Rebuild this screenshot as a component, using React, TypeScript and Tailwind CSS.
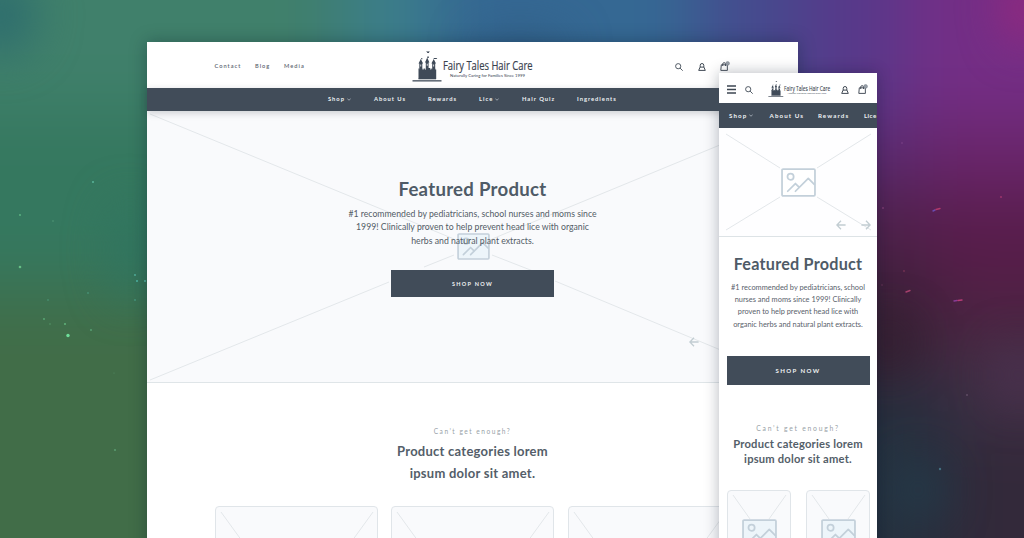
import type { ReactNode } from "react";

const stars: [number, number, number, string][] = [
  [93, 182, 1, "#58b59a"], [20, 215, 0.9, "#5fb985"], [53, 221, 0.7, "#5aa07c"],
  [20, 267, 1.3, "#66bf86"], [135, 275, 0.9, "#53b4a0"], [137, 281, 1, "#4fb6a6"],
  [145, 281, 0.9, "#58c0ae"], [88, 293, 0.8, "#4fa287"], [48, 300, 0.8, "#4f9d7d"],
  [135, 300, 0.8, "#4eab94"], [44, 319, 0.9, "#5cac78"], [65, 324, 1, "#62b37b"],
  [68, 335.5, 1.7, "#6fdf9a"], [91, 330, 0.9, "#5aa578"], [50, 324, 0.7, "#5a9d70"],
  [115, 450, 1, "#5b9d70"], [114, 373, 0.6, "#548c66"], [902, 143, 0.8, "#7d4688"],
  [883, 208, 1, "#7b3a70"], [1001, 197, 1.1, "#99336b"], [904, 271, 0.9, "#753252"],
  [882, 285, 0.8, "#6a3458"], [967, 395, 1.1, "#5d4a62"], [940, 469, 1.2, "#456f80"],
];

function Nebula() {
  return (
    <svg className="absolute inset-0 h-full w-full" viewBox="0 0 1024 538" preserveAspectRatio="none">
      <defs>
        <filter id="haze" filterUnits="userSpaceOnUse" x="-200" y="-200" width="1424" height="938" colorInterpolationFilters="sRGB">
          <feGaussianBlur stdDeviation="34" />
        </filter>
        <filter id="mist" filterUnits="userSpaceOnUse" x="-200" y="-200" width="1424" height="938" colorInterpolationFilters="sRGB">
          <feGaussianBlur stdDeviation="22" />
        </filter>
      </defs>
      <g filter="url(#haze)">
        <rect x="-200" y="-200" width="1424" height="938" fill="#35647a" />
        <rect x="-200" y="-200" width="540" height="320" fill="#40806b" />
        <rect x="-200" y="110" width="500" height="200" fill="#35785f" />
        <rect x="-200" y="290" width="500" height="450" fill="#416d48" />
        <rect x="345" y="-200" width="95" height="320" fill="#3c7f8a" />
        <rect x="430" y="-200" width="290" height="320" fill="#356893" />
        <rect x="700" y="-200" width="115" height="380" fill="#454b8e" />
        <rect x="800" y="-200" width="110" height="350" fill="#57398a" />
        <rect x="905" y="-200" width="320" height="330" fill="#742e86" />
        <rect x="800" y="120" width="120" height="75" fill="#592a6f" />
        <rect x="915" y="120" width="310" height="80" fill="#69256a" />
        <rect x="800" y="190" width="120" height="90" fill="#4b2149" />
        <rect x="915" y="195" width="310" height="110" fill="#571d4a" />
        <rect x="800" y="275" width="130" height="110" fill="#352033" />
        <rect x="925" y="295" width="300" height="60" fill="#4a2440" />
        <rect x="925" y="350" width="300" height="85" fill="#422f46" />
        <rect x="800" y="385" width="150" height="360" fill="#25313f" />
        <rect x="945" y="425" width="280" height="320" fill="#33293a" />
      </g>
      <g filter="url(#mist)">
        <ellipse cx="0" cy="15" rx="36" ry="40" fill="#2e6d6e" />
        <ellipse cx="130" cy="250" rx="20" ry="50" fill="#30745f" />
        <ellipse cx="520" cy="45" rx="50" ry="10" fill="#2d587d" />
        <ellipse cx="1024" cy="8" rx="20" ry="38" fill="#97287d" />
        <ellipse cx="1018" cy="375" rx="22" ry="32" fill="#4a324f" />
        <ellipse cx="918" cy="490" rx="26" ry="32" fill="#243948" />
        <ellipse cx="888" cy="342" rx="22" ry="22" fill="#341e30" />
      </g>
      {stars.map(([x, y, r, c]) => (
        <circle key={`${x}-${y}`} cx={x} cy={y} r={r} fill={c} />
      ))}
      <g strokeLinecap="round" strokeWidth="1.4" fill="none">
        <path d="M933 211l2-1" stroke="#6b4bb0" />
        <path d="M936 209.500l4-1" stroke="#b23a6c" />
        <path d="M906 292l4-1.500" stroke="#a5406c" />
        <path d="M954 301l3-.5" stroke="#8a3c98" />
        <path d="M958 300.500l4-.5" stroke="#b83d76" />
      </g>
    </svg>
  );
}

function Castle() {
  return (
    <g fill="#3f4a58">
      <path d="M.5 31.200h29v1.300H.5z" />
      <path d="M6.500 19.500h1.200v1h1.300v-1h1.300v1h1.300v-1h1.300v1h1v-1.500h4.400v1.500h1v-1h1.300v1h1.300v-1h1.300v1h1v9.500H6.500z" />
      <path d="M7.300 14h3v7h-3zM13.800 13h2.800v7h-2.800zM20.200 14h3v7h-3z" />
      <path d="M6.500 14.600l2.300-4.600 2.300 4.600zM13 13.600l2.200-5.200 2.200 5.200zM19.400 14.600l2.300-4.600 2.300 4.600z" />
      <path d="M15.300 7.600h1.500v1.300h-1.500zM21.700 9h3.600l-.8 1.100h-2.800zM9 9.200h1.400v1H9z" />
      <path d="M14.200 2.200l1.800.4 1.700-.4-.9 1.700-1.300.2z" />
      <path d="M6.500 29.500h17.500v.8H6.500z" />
      <path d="M8.400 15.500h.8v2h-.8zM14.800 14.800h.8v2h-.8zM21.300 15.500h.8v2h-.8z" fill="#fff" />
    </g>
  );
}

function Logo({ className }: { className: string }) {
  return (
    <svg className={className} viewBox="0 0 122 34" overflow="visible">
      <Castle />
      <text x="31" y="21.200" fontFamily="'Open Sans', sans-serif" fontSize="13.200" fontWeight="500" fill="#39424e" stroke="#39424e" strokeWidth=".2" textLength="89.500" lengthAdjust="spacingAndGlyphs">
        Fairy Tales Hair Care
      </text>
      <text x="38" y="27.700" fontFamily="Lato, sans-serif" fontSize="4.300" fontWeight="500" fill="#4a535f" textLength="75" lengthAdjust="spacingAndGlyphs">
        Naturally Caring for Families Since 1999
      </text>
    </svg>
  );
}

const SearchIcon = () => (
  <svg className="h-[8px] w-[8px]" viewBox="0 0 8 8" fill="none" stroke="#4a535e" strokeWidth=".95">
    <circle cx="3.2" cy="3.2" r="2.600" />
    <path d="M5.100 5.100l2.600 2.600" />
  </svg>
);

const AccountIcon = () => (
  <svg className="h-[8px] w-[8px]" viewBox="0 0 8 8" fill="none" stroke="#414a55" strokeWidth="1">
    <path d="M2.200 4.200V2.400a1.800 1.900 0 0 1 3.600 0v1.800" />
    <path d="M2.100 4.100h3.800l1.400 3.300H.7z" />
  </svg>
);

const BagIcon = () => (
  <svg className="h-[10px] w-[10px]" viewBox="0 0 10 10" fill="none" stroke="#414a55" strokeWidth=".95">
    <path d="M1.300 3.800h6l.1 5.600H.8zM2.700 5V3c0-1.800 2.800-1.800 2.800 0v2" />
    <circle cx="7.600" cy="2.400" r="1.900" fill="#98a0a9" stroke="#79818b" strokeWidth=".5" />
  </svg>
);

const Chevron = () => (
  <svg className="h-[3px] w-[4px]" viewBox="0 0 4 3" fill="none" stroke="#b4bcc5" strokeWidth=".8">
    <path d="M.4.800L2 2.200 3.600.800" />
  </svg>
);

function Picture({ className, fill = "#edf5fa" }: { className: string; fill?: string }) {
  return (
    <svg className={className} viewBox="0 0 34 28" fill="none" stroke="#c3d0da" strokeWidth="1.700" strokeLinejoin="round" strokeLinecap="round">
      <rect x="1" y="1" width="32" height="26" rx="1" fill={fill} />
      <circle cx="9.300" cy="8.400" r="3" />
      <path d="M6.500 22.500l7.500-7.500 3.800 3.800M14 22.500L26.500 10l5.800 5.800" />
    </svg>
  );
}

const Arrow = ({ flip = false }: { flip?: boolean }) => (
  <svg className={flip ? "h-[10px] w-[10px] rotate-180" : "h-[10px] w-[10px]"} viewBox="0 0 10 10" fill="none" stroke="#c2cdd2" strokeWidth="1.300">
    <path d="M9.600 5H1M5 .8L.9 5 5 9.200" />
  </svg>
);

function Cross({ lines }: { lines: string }) {
  return (
    <svg className="absolute inset-0 h-full w-full" fill="none" stroke="#e3e7ea" strokeWidth="1">
      <path d={lines} />
    </svg>
  );
}

function NavItem({ className, children, menu = false }: { className: string; children: ReactNode; menu?: boolean }) {
  return (
    <a className={`flex shrink-0 items-center gap-[2px] whitespace-nowrap ${className}`}>
      {children}
      {menu && <Chevron />}
    </a>
  );
}

function DesktopWindow() {
  return (
    <main className="absolute top-[42px] left-[147px] flex h-[520px] w-[651px] flex-col bg-white shadow-[0_0_16px_rgba(10,25,40,0.35)]">
      <header className="flex h-[46px] shrink-0 items-center pl-[67.5px] pr-[68px]">
        <nav className="flex w-[197.5px] pt-[3px] text-[5.7px] font-semibold tracking-[1px] text-[#5c6571]">
          <a className="w-[40.5px]">Contact</a>
          <a className="w-[29px]">Blog</a>
          <a>Media</a>
        </nav>
        <Logo className="mt-[1px] h-[34px] w-[122px]" />
        <div className="ml-auto flex items-center gap-[14.5px] pt-[3px]">
          <SearchIcon />
          <AccountIcon />
          <div className="-mt-[2px]"><BagIcon /></div>
        </div>
      </header>
      <nav className="z-10 flex h-[23px] shrink-0 items-center bg-[#414c59] pl-[181px] text-[5.8px] font-bold tracking-[0.98px] text-[#eef1f4] shadow-[0_2px_7px_rgba(40,50,60,0.22)]">
        <NavItem className="w-[46px]" menu>Shop</NavItem>
        <NavItem className="w-[54px]">About Us</NavItem>
        <NavItem className="w-[51px]">Rewards</NavItem>
        <NavItem className="w-[43px]" menu>Lice</NavItem>
        <NavItem className="w-[55px]">Hair Quiz</NavItem>
        <NavItem className="w-[50px]">Ingredients</NavItem>
      </nav>
      <section className="relative flex h-[271.5px] shrink-0 flex-col items-center border-b border-[#dfe5e8] bg-[#f9fafc] pt-[66px]">
        <Cross lines="M3 3L307 128M345 144L386 160M648 3L345 128M307 144L277 156M242 171L3 269M408 170L648 270" />
        <Picture className="absolute top-[122px] left-[310px] h-[27px] w-[33px]" />
        <div className="absolute top-[226px] left-[542px]"><Arrow /></div>
        <h1 className="relative text-[18.6px] leading-[24px] font-bold tracking-[0.28px] text-[#4f5b67]">Featured Product</h1>
        <p className="relative mt-[5.5px] text-center text-[8.7px] leading-[13.6px] font-normal tracking-[0.01px] text-[#535c66]">
          #1 recommended by pediatricians, school nurses and moms since<br />
          1999! Clinically proven to help prevent head lice with organic<br />
          herbs and natural plant extracts.
        </p>
        <a className="relative mt-[22.800px] flex h-[27px] w-[163px] items-center justify-center bg-[#414c59] pt-[1px] text-[5.500px] font-bold tracking-[1.300px] text-[#eef0f2]">
          SHOP NOW
        </a>
      </section>
      <section className="flex flex-col items-center pt-[44px]">
        <p className="text-[6.6px] leading-[9px] tracking-[1.5px] text-[#989fa7]">Can’t get enough?</p>
        <h2 className="mt-[4.5px] text-center text-[13px] leading-[22px] font-bold tracking-[0.25px] text-[#545e69]">
          Product categories lorem<br />ipsum dolor sit amet.
        </h2>
        <div className="mt-[21.500px] flex gap-[13.5px]">
          {[0, 1, 2].map((n) => (
            <div key={n} className="relative h-[60px] w-[163px] rounded-[4px] border border-[#e0e5e9] bg-[#f9fafc]">
              <Cross lines="M5 5L34 45M157 5L128 45" />
            </div>
          ))}
        </div>
      </section>
    </main>
  );
}

function MobileWindow() {
  return (
    <aside className="absolute top-[73px] left-[719px] z-20 flex h-[480px] w-[158px] flex-col overflow-hidden bg-white">
      <header className="flex h-[30px] shrink-0 items-center pt-[3px] pl-[8px]">
        <svg className="h-[9px] w-[9px]" viewBox="0 0 9 9" stroke="#3d4651" strokeWidth="1.500">
          <path d="M0 1h9M0 4.500h9M0 8h9" />
        </svg>
        <div className="ml-[9px]"><SearchIcon /></div>
        <Logo className="-mt-[1px] ml-[14.5px] h-[17.5px] w-[63px]" />
        <div className="ml-[10px]"><AccountIcon /></div>
        <div className="-mt-[2px] ml-[9.500px]"><BagIcon /></div>
      </header>
      <nav className="flex h-[24.5px] shrink-0 items-center bg-[#414c59] pl-[10px] text-[6.2px] font-bold tracking-[1.1px] text-[#eef1f4]">
        <NavItem className="w-[40.5px]" menu>Shop</NavItem>
        <NavItem className="w-[48.5px]">About Us</NavItem>
        <NavItem className="w-[46px]">Rewards</NavItem>
        <NavItem className="w-[13px] tracking-[0.4px]">Lice</NavItem>
      </nav>
      <section className="relative h-[109px] shrink-0 border-b border-[#dde3e6] bg-[#fefeff]">
        <Cross lines="M7 6L61 40M152 6L98 40M7 102L61 69M152 102L98 69" />
        <Picture className="absolute top-[40px] left-[62px] h-[29px] w-[35px]" fill="#ffffff" />
        <div className="absolute top-[92px] left-[117px] flex gap-[15px]"><Arrow /><Arrow flip /></div>
      </section>
      <section className="flex shrink-0 flex-col items-center pt-[16px]">
        <h1 className="text-[16.2px] leading-[22px] font-bold tracking-[0.22px] text-[#4f5b67]">Featured Product</h1>
        <p className="mt-[7.5px] text-center text-[7.4px] leading-[12.2px] font-normal text-[#59616b]">
          #1 recommended by pediatricians, school<br />
          nurses and moms since 1999! Clinically<br />
          proven to help prevent head lice with<br />
          organic herbs and natural plant extracts.
        </p>
        <a className="mt-[25px] flex h-[29.5px] w-[143px] items-center justify-center bg-[#414c59] pt-[1px] text-[6.1px] font-bold tracking-[1.400px] text-[#eef0f2]">
          SHOP NOW
        </a>
      </section>
      <section className="flex shrink-0 flex-col items-center pt-[38.500px]">
        <p className="text-[6.8px] leading-[9px] tracking-[1.75px] text-[#989fa7]">Can’t get enough?</p>
        <h2 className="mt-[4.500px] text-center text-[11.2px] leading-[14.5px] font-bold tracking-[0.2px] text-[#545e69]">
          Product categories lorem<br />ipsum dolor sit amet.
        </h2>
        <div className="mt-[23.500px] flex gap-[15px]">
          {[0, 1].map((n) => (
            <div key={n} className="relative h-[70px] w-[64px] rounded-[4px] border border-[#e0e5e9] bg-[#f9fafc]">
              <Cross lines="M5 4L22 28M58 4L41 28" />
              <Picture className="absolute top-[28px] left-[14px] h-[29px] w-[35px]" />
            </div>
          ))}
        </div>
      </section>
    </aside>
  );
}

export default function App() {
  return (
    <div className="relative h-[538px] w-[1024px] overflow-hidden font-['Lato','Open_Sans',sans-serif]">
      <Nebula />
      <DesktopWindow />
      <div className="absolute top-[73px] left-[719px] h-[480px] w-[158px] shadow-[0_0_14px_rgba(10,20,35,0.3)]" />
      <MobileWindow />
    </div>
  );
}
